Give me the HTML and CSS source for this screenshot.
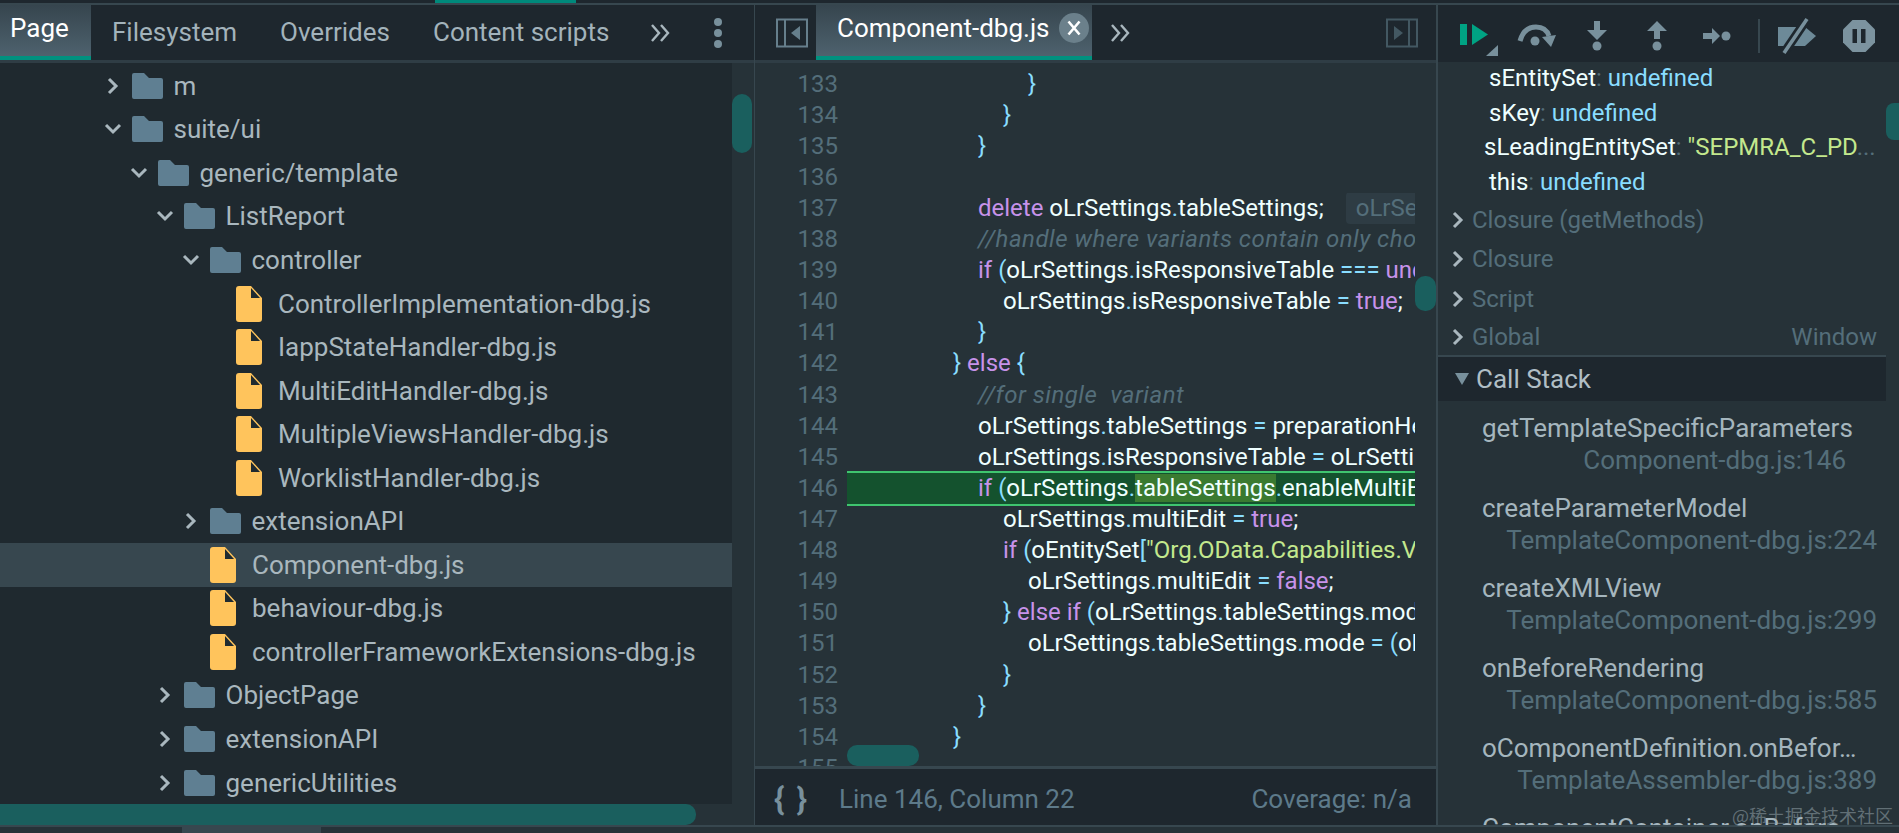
FILE: index.html
```html
<!DOCTYPE html>
<html lang="en">
<head>
  <meta charset="UTF-8">
  <meta name="viewport" content="width=device-width, initial-scale=1.0">
  <title>Sources panel</title>
  <link rel="stylesheet" href="styles.css">
</head>
<body>
  <svg class="sprite">
    <symbol id="folder" viewBox="0 0 31 26"><path d="M2 0h10l5 5h12a2 2 0 0 1 2 2v17a2 2 0 0 1-2 2H2a2 2 0 0 1-2-2V2a2 2 0 0 1 2-2z" fill="#5f7f92"/></symbol>
    <symbol id="file" viewBox="0 0 26 36"><path d="M3 0h12l11 12v21a3 3 0 0 1-3 3H3a3 3 0 0 1-3-3V3a3 3 0 0 1 3-3z" fill="#ffc45c"/><path d="M15 2v10h9z" fill="#1f2a30"/></symbol>
    <symbol id="chev-right" viewBox="0 0 12 18"><path d="M2 2l7 7-7 7" fill="none" stroke="#a9b7be" stroke-width="3"/></symbol>
    <symbol id="chev-down" viewBox="0 0 18 12"><path d="M2 2l7 7 7-7" fill="none" stroke="#a9b7be" stroke-width="3"/></symbol>
    <symbol id="more" viewBox="0 0 20 18"><path d="M2 1l7 8-7 8M11 1l7 8-7 8" fill="none" stroke="#a9b7be" stroke-width="2.4"/></symbol>
  </svg>

  <div class="topstrip"><div class="topstrip-mark"></div></div>

  <div class="panes">
    <div class="pane-left">
      <div class="tabbar">
        <div class="tab active page-tab">Page</div>
        <div class="tab">Filesystem</div>
        <div class="tab">Overrides</div>
        <div class="tab">Content scripts</div>
        <svg class="more-icon"><use href="#more"/></svg>
        <div class="kebab"><i></i><i></i><i></i></div>
      </div>
      <div class="tree-wrap">
        <div class="tree">
          <div class="row lv0"><span class="arrow"><svg class="chev-r"><use href="#chev-right"/></svg></span><svg class="folder"><use href="#folder"/></svg><span>m</span></div>
          <div class="row lv0"><span class="arrow"><svg class="chev-d"><use href="#chev-down"/></svg></span><svg class="folder"><use href="#folder"/></svg><span>suite/ui</span></div>
          <div class="row lv1"><span class="arrow"><svg class="chev-d"><use href="#chev-down"/></svg></span><svg class="folder"><use href="#folder"/></svg><span>generic/template</span></div>
          <div class="row lv2"><span class="arrow"><svg class="chev-d"><use href="#chev-down"/></svg></span><svg class="folder"><use href="#folder"/></svg><span>ListReport</span></div>
          <div class="row lv3"><span class="arrow"><svg class="chev-d"><use href="#chev-down"/></svg></span><svg class="folder"><use href="#folder"/></svg><span>controller</span></div>
          <div class="row lv4"><span class="arrow"></span><svg class="file"><use href="#file"/></svg><span>ControllerImplementation-dbg.js</span></div>
          <div class="row lv4"><span class="arrow"></span><svg class="file"><use href="#file"/></svg><span>IappStateHandler-dbg.js</span></div>
          <div class="row lv4"><span class="arrow"></span><svg class="file"><use href="#file"/></svg><span>MultiEditHandler-dbg.js</span></div>
          <div class="row lv4"><span class="arrow"></span><svg class="file"><use href="#file"/></svg><span>MultipleViewsHandler-dbg.js</span></div>
          <div class="row lv4"><span class="arrow"></span><svg class="file"><use href="#file"/></svg><span>WorklistHandler-dbg.js</span></div>
          <div class="row lv3"><span class="arrow"><svg class="chev-r"><use href="#chev-right"/></svg></span><svg class="folder"><use href="#folder"/></svg><span>extensionAPI</span></div>
          <div class="row lv3 selected"><span class="arrow"></span><svg class="file"><use href="#file"/></svg><span>Component-dbg.js</span></div>
          <div class="row lv3"><span class="arrow"></span><svg class="file"><use href="#file"/></svg><span>behaviour-dbg.js</span></div>
          <div class="row lv3"><span class="arrow"></span><svg class="file"><use href="#file"/></svg><span>controllerFrameworkExtensions-dbg.js</span></div>
          <div class="row lv2"><span class="arrow"><svg class="chev-r"><use href="#chev-right"/></svg></span><svg class="folder"><use href="#folder"/></svg><span>ObjectPage</span></div>
          <div class="row lv2"><span class="arrow"><svg class="chev-r"><use href="#chev-right"/></svg></span><svg class="folder"><use href="#folder"/></svg><span>extensionAPI</span></div>
          <div class="row lv2"><span class="arrow"><svg class="chev-r"><use href="#chev-right"/></svg></span><svg class="folder"><use href="#folder"/></svg><span>genericUtilities</span></div>
        </div>
        <div class="scroll-col tree-scroll"><div class="thumb-v"></div></div>
      </div>
      <div class="tree-hscroll"><div class="thumb-h"></div></div>
    </div>

    <div class="pane-center">
      <div class="tabbar center-tabbar">
        <svg class="toggle" width="34" height="30" viewBox="0 0 34 30"><path d="M2 1.500h30v27H2zM10 1.500v27" fill="none" stroke="#667f8c" stroke-width="2"/><path d="M25 8v14l-9-7z" fill="#667f8c"/></svg>
        <div class="tab active file-tab">Component-dbg.js
          <svg class="close" width="30" height="30" viewBox="0 0 30 30"><circle cx="15" cy="15" r="15" fill="#6b808b"/><path d="M9.500 8.500l11 13M20.500 8.500l-11 13" stroke="#fff" stroke-width="2.600"/></svg>
        </div>
        <svg class="more-icon file-more"><use href="#more"/></svg>
        <svg class="toggle toggle-right" width="34" height="30" viewBox="0 0 34 30"><path d="M2 1.500h30v27H2zM24 1.500v27" fill="none" stroke="#435862" stroke-width="2"/><path d="M9 8v14l9-7z" fill="#435862"/></svg>
      </div>
      <div class="editor-wrap">
        <div class="editor">
          <div class="line"><span class="num">133</span><span class="code n3"><b class="p">}</b></span></div>
          <div class="line"><span class="num">134</span><span class="code n2"><b class="p">}</b></span></div>
          <div class="line"><span class="num">135</span><span class="code n1"><b class="p">}</b></span></div>
          <div class="line"><span class="num">136</span><span class="code n1"></span></div>
          <div class="line"><span class="num">137</span><span class="code n1"><b class="k">delete</b> oLrSettings<b class="p">.</b>tableSettings;<span class="chip">oLrSettings</span></span></div>
          <div class="line"><span class="num">138</span><span class="code n1"><em class="c">//handle where variants contain only chooses</em></span></div>
          <div class="line"><span class="num">139</span><span class="code n1"><b class="k">if</b> <b class="p">(</b>oLrSettings<b class="p">.</b>isResponsiveTable <b class="p">===</b> <b class="k">undefined</b><b class="p">)</b></span></div>
          <div class="line"><span class="num">140</span><span class="code n2">oLrSettings<b class="p">.</b>isResponsiveTable <b class="p">=</b> <b class="k">true</b>;</span></div>
          <div class="line"><span class="num">141</span><span class="code n1"><b class="p">}</b></span></div>
          <div class="line"><span class="num">142</span><span class="code n0"><b class="p">}</b> <b class="k">else</b> <b class="p">{</b></span></div>
          <div class="line"><span class="num">143</span><span class="code n1"><em class="c">//for single  variant</em></span></div>
          <div class="line"><span class="num">144</span><span class="code n1">oLrSettings<b class="p">.</b>tableSettings <b class="p">=</b> preparationHelper</span></div>
          <div class="line"><span class="num">145</span><span class="code n1">oLrSettings<b class="p">.</b>isResponsiveTable <b class="p">=</b> oLrSettings</span></div>
          <div class="line"><span class="num">146</span><span class="code n1 exec"><b class="k">if</b> <b class="p">(</b>oLrSettings<b class="p">.</b><span class="hit">tableSettings</span><b class="p">.</b>enableMultiEdit</span></div>
          <div class="line"><span class="num">147</span><span class="code n2">oLrSettings<b class="p">.</b>multiEdit <b class="p">=</b> <b class="k">true</b>;</span></div>
          <div class="line"><span class="num">148</span><span class="code n2"><b class="k">if</b> <b class="p">(</b>oEntitySet<b class="p">[</b><b class="s">"Org.OData.Capabilities.V1</b></span></div>
          <div class="line"><span class="num">149</span><span class="code n3">oLrSettings<b class="p">.</b>multiEdit <b class="p">=</b> <b class="k">false</b>;</span></div>
          <div class="line"><span class="num">150</span><span class="code n2"><b class="p">}</b> <b class="k">else if</b> <b class="p">(</b>oLrSettings<b class="p">.</b>tableSettings<b class="p">.</b>mode</span></div>
          <div class="line"><span class="num">151</span><span class="code n3">oLrSettings<b class="p">.</b>tableSettings<b class="p">.</b>mode <b class="p">=</b> <b class="p">(</b>oLrSettings</span></div>
          <div class="line"><span class="num">152</span><span class="code n2"><b class="p">}</b></span></div>
          <div class="line"><span class="num">153</span><span class="code n1"><b class="p">}</b></span></div>
          <div class="line"><span class="num">154</span><span class="code n0"><b class="p">}</b></span></div>
          <div class="line"><span class="num">155</span><span class="code n0"></span></div>
          <div class="editor-thumb"></div>
        </div>
        <div class="scroll-col editor-scroll"><div class="thumb-v"></div></div>
      </div>
      <div class="statusbar">
        <span class="braces">{ }</span>
        <span class="pos">Line 146, Column 22</span>
        <span class="coverage">Coverage: n/a</span>
      </div>
    </div>

    <div class="pane-right">
      <div class="toolbar">
        <span class="tool"><svg class="resume" width="38" height="33" viewBox="0 0 38 33"><rect y="0" width="7" height="21" fill="#00a383"/><path d="M12 0l16 10.500L12 21z" fill="#00a383"/><path d="M26 32h12V21z" fill="#78909c"/></svg></span>
        <span class="tool"><svg width="40" height="24" viewBox="0 0 40 24"><path d="M3 17C6 6 13 3 19 3c6 0 11 3 13 9" fill="none" stroke="#78909c" stroke-width="5"/><path d="M25 13l14-2-5 12z" fill="#78909c"/><circle cx="18" cy="17" r="4.500" fill="#78909c"/></svg></span>
        <span class="tool"><svg width="20" height="30" viewBox="0 0 20 30"><path d="M7 0h6v9h7L10 19 0 9h7z" fill="#78909c"/><circle cx="10" cy="25" r="4.500" fill="#78909c"/></svg></span>
        <span class="tool"><svg width="20" height="30" viewBox="0 0 20 30"><path d="M10 0l10 10h-7v8H7v-8H0z" fill="#78909c"/><circle cx="10" cy="25" r="4.500" fill="#78909c"/></svg></span>
        <span class="tool"><svg width="28" height="16" viewBox="0 0 28 16"><path d="M0 5h9V0l8 8-8 8v-5H0z" fill="#78909c"/><circle cx="23" cy="8" r="4.500" fill="#78909c"/></svg></span>
        <span class="tool-sep"></span>
        <span class="tool deact"><svg width="40" height="36" viewBox="0 0 40 36"><path d="M1 9h27l11 9-11 10H1z" fill="#6d8a98"/><path d="M30 1L7 35" stroke="#1e272e" stroke-width="9"/><path d="M30 1L7 35" stroke="#78909c" stroke-width="3.600"/></svg></span>
        <span class="tool pause"><svg width="32" height="32" viewBox="0 0 32 32"><path d="M9.500 0h13L32 9.500v13L22.500 32h-13L0 22.500v-13z" fill="#7c939f"/><rect x="9.500" y="9" width="4.500" height="14" fill="#1e272e"/><rect x="18" y="9" width="4.500" height="14" fill="#1e272e"/></svg></span>
      </div>
      <div class="right-body">
        <div class="sidebar">
          <div class="scope-vars">
            <div class="var">sEntitySet<i>:</i> <b class="p">undefined</b></div>
            <div class="var">sKey<i>:</i> <b class="p">undefined</b></div>
            <div class="var var-long">sLeadingEntitySet<i>:</i> <b class="s">"SEPMRA_C_PD</b><i>...</i></div>
            <div class="var">this<i>:</i> <b class="p">undefined</b></div>
          </div>
          <div class="scope"><svg class="scope-arrow"><use href="#chev-right"/></svg><span>Closure (getMethods)</span></div>
          <div class="scope"><svg class="scope-arrow"><use href="#chev-right"/></svg><span>Closure</span></div>
          <div class="scope"><svg class="scope-arrow"><use href="#chev-right"/></svg><span>Script</span></div>
          <div class="scope scope-last"><svg class="scope-arrow"><use href="#chev-right"/></svg><span>Global</span><span class="scope-value">Window</span></div>
          <div class="section-head"><span class="tri"></span>Call Stack</div>
          <div class="frames">
            <div class="frame"><div class="frame-name">getTemplateSpecificParameters</div><div class="frame-file file-short">Component-dbg.js:146</div></div>
            <div class="frame"><div class="frame-name">createParameterModel</div><div class="frame-file">TemplateComponent-dbg.js:224</div></div>
            <div class="frame"><div class="frame-name">createXMLView</div><div class="frame-file">TemplateComponent-dbg.js:299</div></div>
            <div class="frame"><div class="frame-name">onBeforeRendering</div><div class="frame-file">TemplateComponent-dbg.js:585</div></div>
            <div class="frame"><div class="frame-name">oComponentDefinition.onBefor…</div><div class="frame-file">TemplateAssembler-dbg.js:389</div></div>
            <div class="frame"><div class="frame-name">ComponentContainer.onBefore</div></div>
          </div>
        </div>
        <div class="right-scroll"><div class="thumb-side"></div></div>
      </div>
    </div>
  </div>

  <div class="bottombar"><div class="bottom-thumb"></div></div>
  <div class="watermark">@稀土掘金技术社区</div>
</body>
</html>
```

FILE: styles.css
```css
* { box-sizing: border-box; }
html, body { margin: 0; height: 833px; overflow: hidden; }
body {
  position: relative;
  display: flex;
  flex-direction: column;
  background: #263238;
  color: #b0bec5;
  font-family: Roboto, "Liberation Sans", sans-serif;
  font-size: 26px;
}
i, em { font-style: normal; }
b { font-weight: normal; }
.sprite { display: none; }

/* top strip */
.topstrip { height: 5px; background: #1e272e; border-bottom: 2px solid #37474f; flex: none; }
.topstrip-mark { width: 141px; height: 3px; margin-left: 435px; background: #00897b; }

.panes { display: flex; height: 820px; flex: none; }
.pane-left { width: 754px; display: flex; flex-direction: column; flex: none; }
.pane-center { width: 684px; display: flex; flex-direction: column; flex: none; border-left: 1px solid #37474f; border-right: 2px solid #37474f; }
.pane-right { flex: 1; display: flex; flex-direction: column; min-width: 0; }

/* tabs */
.tabbar { height: 58px; flex: none; display: flex; align-items: stretch; background: #1e272e; border-bottom: 3px solid #2f3d45; }
.tab { display: flex; align-items: center; padding: 0 22px 2px 21px; color: #a3b3bb; white-space: nowrap; }
.tab.active { color: #fff; background: linear-gradient(#36454e, #4e626e); border-bottom: 4px solid #00917f; }
.page-tab { width: 91px; padding: 0 0 5px 10px; }
.more-icon { width: 20px; height: 18px; align-self: center; margin-left: 19px; }
.kebab { display: flex; flex-direction: column; justify-content: center; gap: 3px; margin-left: 44px; }
.kebab i { display: block; width: 8px; height: 8px; border-radius: 50%; background: #78909c; }

.center-tabbar { padding-left: 20px; }
.toggle { align-self: center; flex: none; }
.file-tab { width: 276px; margin-left: 7px; padding: 0 0 5px 21px; gap: 9px; }
.close { flex: none; }
.file-more { margin-left: 18px; }
.toggle-right { margin-left: auto; margin-right: 17px; }

/* file tree */
.tree-wrap { flex: 1; display: flex; min-height: 0; }
.tree { flex: 1; background: #1f292f; padding-top: 1px; overflow: hidden; }
.row { height: 43.560px; display: flex; align-items: center; white-space: nowrap; color: #a9b7be; }
.row.lv0 { padding-left: 105px; }
.row.lv1 { padding-left: 131px; }
.row.lv2 { padding-left: 157px; }
.row.lv3 { padding-left: 183px; }
.row.lv4 { padding-left: 209px; }
.row.selected { background: #37474f; }
.arrow { width: 27px; flex: none; display: flex; }
.chev-r { width: 12px; height: 18px; margin-left: 2px; }
.chev-d { width: 18px; height: 12px; margin-left: -1px; }
.folder { width: 31px; height: 26px; margin-right: 10.500px; flex: none; }
.file { width: 26px; height: 36px; margin-right: 16px; flex: none; }

.scroll-col { width: 22px; flex: none; background: #263238; }
.tree-scroll { padding-top: 31px; }
.thumb-v { width: 20px; height: 59px; border-radius: 10px; background: #1a5f5e; }
.tree-hscroll { height: 21px; flex: none; background: #263238; }
.thumb-h { width: 696px; height: 21px; border-radius: 0 10px 10px 0; background: #1a5f5e; }

/* editor */
.editor-wrap { flex: 1; display: flex; min-height: 0; background: #263238; border-bottom: 3px solid #37474f; }
.editor { position: relative; flex: 1; min-width: 0; padding-top: 5.500px; overflow: hidden; font-size: 24px; }
.line { height: 31.120px; line-height: 31.120px; display: flex; color: #eeffff; }
.num { width: 83px; flex: none; margin-right: 9px; text-align: right; color: #546e7a; }
.code { flex: 1; min-width: 0; white-space: pre; overflow: hidden; }
.n0 { padding-left: 106px; }
.n1 { padding-left: 131px; }
.n2 { padding-left: 156px; }
.n3 { padding-left: 181px; }
.k { color: #c792ea; }
.p { color: #89ddff; }
.s { color: #c3e88d; }
.c { color: #546e7a; font-style: italic; letter-spacing: 0.5px; }
.chip { margin-left: 22px; padding: 2px 10px; border-radius: 4px; background: #2e3c44; color: #546e7a; }
.exec { background: #14522e; box-shadow: 0 -2px 0 #3fc56f, 0 2px 0 #3fc56f; position: relative; }
.hit { background: #3a7a30; }
.editor-thumb { position: absolute; left: 92px; bottom: 0; width: 72px; height: 21px; border-radius: 10px; background: #1a5f5e; }
.editor-scroll { width: 21px; padding-top: 213px; }
.editor-scroll .thumb-v { width: 21px; height: 35px; }

.statusbar { height: 56px; flex: none; display: flex; align-items: center; background: #1e272e; color: #5d7a8a; padding: 3px 24px 0 19px; }
.braces { width: 65px; font-size: 32px; font-weight: bold; letter-spacing: 2px; color: #78909c; }
.coverage { margin-left: auto; }

/* debugger sidebar */
.toolbar { height: 57px; flex: none; display: flex; align-items: center; padding: 4px 0 0 9px; background: #1e272e; }
.tool { width: 60px; display: flex; justify-content: center; flex: none; }
.resume { margin: 9px 0 0 4px; }
.tool-sep { width: 2px; height: 34px; margin-left: 11px; background: #37474f; }
.deact { margin-left: 7px; }
.pause { margin-left: 2px; }

.right-body { flex: 1; display: flex; min-height: 0; }
.sidebar { flex: 1; min-width: 0; overflow: hidden; }
.scope-vars { font-size: 24px; margin-top: -1px; }
.var { height: 34.700px; line-height: 34.700px; padding-left: 51px; color: #eeffff; white-space: nowrap; }
.var i { color: #546e7a; }
.var-long { padding-left: 46px; }
.scope { position: relative; height: 39.500px; display: flex; align-items: center; padding-left: 14px; color: #546e7a; font-size: 24px; }
.scope-arrow { width: 12px; height: 18px; margin-right: 8px; flex: none; }
.scope-value { margin-left: auto; padding-right: 9px; }
.scope-last { height: 39px; border-bottom: 2px solid #37474f; }
.section-head { height: 44px; display: flex; align-items: center; padding-left: 17px; background: #1e272e; color: #b0bec5; }
.tri { width: 0; height: 0; margin-right: 7px; border-left: 7px solid transparent; border-right: 7px solid transparent; border-top: 12px solid #78909c; }
.frame { height: 80px; padding: 12px 9px 0 44px; white-space: nowrap; }
.frame-name { height: 32px; line-height: 31px; color: #a5b6be; }
.frame-file { height: 31px; line-height: 31px; text-align: right; color: #546e7a; }
.file-short { padding-right: 31px; }
.right-scroll { width: 13px; flex: none; padding-top: 41px; }
.thumb-side { height: 37px; border-radius: 8px 0 0 8px; background: #1a5f5e; }

.bottombar { height: 8px; flex: none; background: #263238; border-top: 2px solid #37474f; }
.bottom-thumb { width: 139px; height: 6px; margin-left: 182px; background: #37474f; }
.watermark { position: absolute; left: 1732px; top: 802px; font-family: "Noto Sans CJK SC", sans-serif; font-size: 18px; color: rgba(150, 165, 172, 0.55); white-space: nowrap; }
```
